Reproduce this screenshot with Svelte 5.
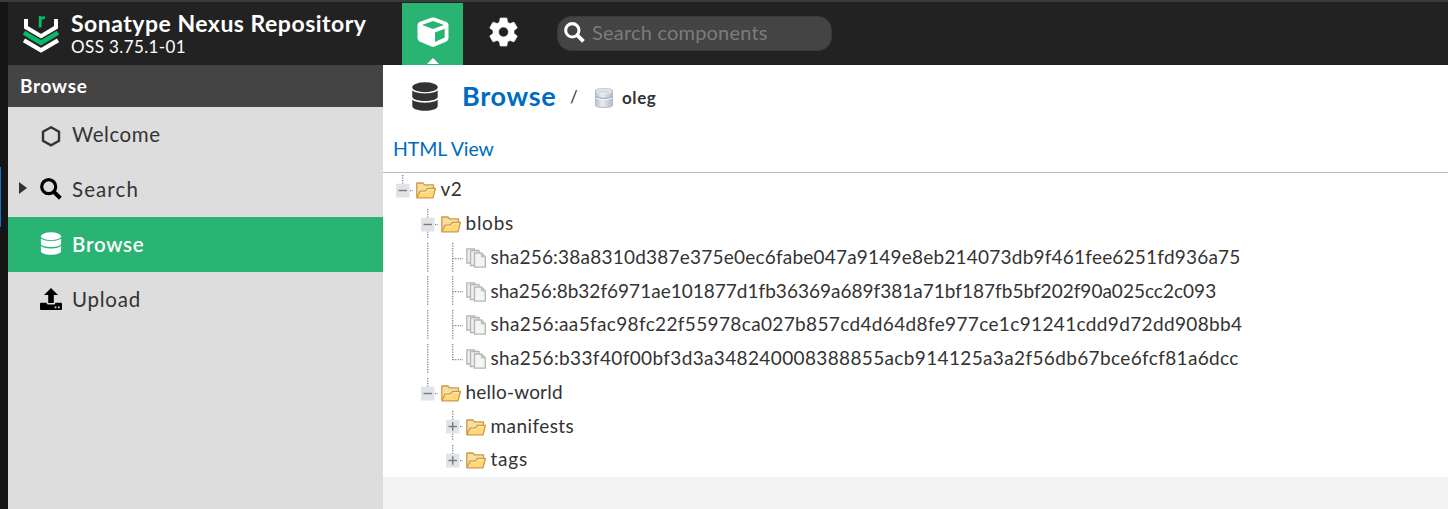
<script>
  const nav = [
    { label: 'Welcome', icon: 'hex', ls: 0.57 },
    { label: 'Search', icon: 'search', ls: 1.1, arrow: true },
    { label: 'Browse', icon: 'db', ls: 0.75, active: true },
    { label: 'Upload', icon: 'upload', ls: 0.75 }
  ];
  // cells: m = minus, p = plus, t = tee, l = last elbow, v = line, e = empty;
  // a second letter tells whether the guide runs through (b) or stops (u)
  const rows = [
    { cells: ['mu'], label: 'v2', ls: 0.5 },
    { cells: ['e', 'mb'], label: 'blobs', ls: 0.75 },
    { cells: ['e', 'v', 't'], file: true, label: 'sha256:38a8310d387e375e0ec6fabe047a9149e8eb214073db9f461fee6251fd936a75', ls: 0.215 },
    { cells: ['e', 'v', 't'], file: true, label: 'sha256:8b32f6971ae101877d1fb36369a689f381a71bf187fb5bf202f90a025cc2c093', ls: 0.01 },
    { cells: ['e', 'v', 't'], file: true, label: 'sha256:aa5fac98fc22f55978ca027b857cd4d64d8fe977ce1c91241cdd9d72dd908bb4', ls: 0.355 },
    { cells: ['e', 'v', 'l'], file: true, label: 'sha256:b33f40f00bf3d3a348240008388855acb914125a3a2f56db67bce6fcf81a6dcc', ls: 0.36 },
    { cells: ['e', 'mu'], label: 'hello-world', ls: 0.2 },
    { cells: ['e', 'e', 'pb'], label: 'manifests', ls: 0.42 },
    { cells: ['e', 'e', 'pu'], label: 'tags', ls: 0.75 }
  ];
</script>

{#snippet search()}
  <svg class="glyph" viewBox="0 0 22 22"><circle cx="8.7" cy="8.7" r="7" fill="none" stroke="currentColor" stroke-width="3.2" /><path d="M13.8 13.8 20.4 20.2" stroke="currentColor" stroke-width="4" /></svg>
{/snippet}

{#snippet database()}
  <svg class="glyph" viewBox="0 0 26 29" fill="currentColor">
    <ellipse cx="13" cy="5.3" rx="12.7" ry="5" />
    <path d="M.3 8.3C4 12.500 22 12.500 25.700 8.300v6.500C25.700 20.400.3 20.400.3 14.800Z" />
    <path d="M.3 17.600C4 21.800 22 21.800 25.700 17.600v6.300C25.700 30.200.3 30.200.3 23.900Z" />
  </svg>
{/snippet}

<div class="shell">
  <div class="edge"><div class="edge-mark"></div></div>
  <div class="app">
    <header>
      <div class="brand">
        <svg class="logo" viewBox="0 0 36 37">
          <g fill="none">
            <path d="M3 3V11.3L18 20.2 33 11.3V3" stroke="#fff" stroke-width="4" />
            <path d="M1 16.600 18 26.800 35 16.600" stroke="#07b968" stroke-width="4.600" />
            <path d="M1 24.300 18 34.300 35 24.300" stroke="#fff" stroke-width="4.200" />
            <path d="M17.200 11.500V0M17.200 3.500Q18.500 1.600 22 1.600" stroke="#07b968" stroke-width="2.800" />
          </g>
        </svg>
        <div class="names">
          <div class="product">Sonatype Nexus Repository</div>
          <div class="version">OSS 3.75.1-01</div>
        </div>
      </div>
      <div class="tab">
        <svg class="cube" viewBox="0 0 32 30"><path d="M14.2.8Q16 0 17.8.8L29.5 5Q31.5 5.8 31.5 8V21Q31.5 23.6 29.4 24.6L17.6 29.4Q16 30 14.4 29.4L2.6 24.6Q.5 23.6.5 21V8Q.5 5.8 2.5 5Z" fill="#fff" /><path d="M16 4.1 27 7.9 16 12 5 7.9ZM18 15.5 27.7 11.8V20.5L18 25Z" fill="#29b473" /></svg>
        <svg class="caret" viewBox="0 0 12 6"><path d="M6 0 12 6H0Z" fill="#fff" /></svg>
      </div>
      <svg class="gear" viewBox="1.700 1.800 20.600 20.400"><path stroke="#fff" stroke-width=".4" fill="#fff" d="M19.43 12.98c.04-.32.07-.64.07-.98s-.03-.66-.07-.98l2.11-1.65c.19-.15.24-.42.12-.64l-2-3.46c-.12-.22-.39-.3-.61-.22l-2.49 1c-.52-.4-1.08-.73-1.69-.98l-.38-2.65C14.46 2.18 14.25 2 14 2h-4c-.25 0-.46.18-.49.42l-.38 2.65c-.61.25-1.17.59-1.69.98l-2.49-1c-.23-.09-.49 0-.61.22l-2 3.46c-.13.22-.07.49.12.64l2.11 1.65c-.04.32-.07.65-.07.98s.03.66.07.98l-2.11 1.65c-.19.15-.24.42-.12.64l2 3.46c.12.22.39.3.61.22l2.49-1c.52.4 1.08.73 1.69.98l.38 2.65c.03.24.24.42.49.42h4c.25 0 .46-.18.49-.42l.38-2.65c.61-.25 1.17-.59 1.69-.98l2.49 1c.23.09.49 0 .61-.22l2-3.46c.12-.22.07-.49-.12-.64zM12 15.5A3.5 3.5 0 1 1 12 8.500a3.500 3.500 0 0 1 0 7z" /></svg>
      <div class="searchbox">{@render search()}<span>Search components</span></div>
    </header>
    <div class="body">
      <aside>
        <div class="heading">Browse</div>
        {#each nav as item}
          <div class="nav" class:active={item.active}>
            <span class="arrow">{#if item.arrow}<svg viewBox="0 0 8 12"><path d="M0 0 8 6 0 12Z" fill="#333" /></svg>{/if}</span>
            <span class="icon {item.icon}">
              {#if item.icon === 'hex'}
                <svg class="glyph" viewBox="0 0 22 22"><path d="M11 2.300 19 6.800V15.800L11 20.300 3 15.800V6.800Z" fill="none" stroke="#333" stroke-width="2.400" /></svg>
              {:else if item.icon === 'search'}
                {@render search()}
              {:else if item.icon === 'db'}
                {@render database()}
              {:else}
                <svg class="glyph" viewBox="0 0 22 22"><path d="M11 0 18 7H13.800V15H8.200V7H4ZM1 14.700H6.700V15.200Q7 16.500 8 16.500H14Q15 16.500 15.300 15.200V14.700H21Q22 14.700 22 15.700V21Q22 22 21 22H1Q0 22 0 21V15.700Q0 14.700 1 14.700Z" fill="#000" /><path d="M14.700 18.600h1.700v1.700h-1.700zM18 18.600h1.700v1.700H18z" fill="#ddd" /></svg>
              {/if}
            </span>
            <span class="text" style="letter-spacing:{item.ls}px">{item.label}</span>
          </div>
        {/each}
      </aside>
      <main>
        <div class="crumbs">
          <span class="crumb-icon">{@render database()}</span>
          <span class="crumb-title">Browse</span>
          <span class="slash">/</span>
          <svg class="repo" viewBox="0 0 18 20">
            <defs><linearGradient id="metal"><stop offset="0" stop-color="#b9c2cc" /><stop offset=".4" stop-color="#e6ecf2" /><stop offset="1" stop-color="#b4bdc8" /></linearGradient></defs>
            <path d="M.5 3Q.5.5 9 .5T17.500 3V17Q17.500 19.500 9 19.500T.5 17Z" fill="url(#metal)" stroke="#b4bcc5" />
            <ellipse cx="9" cy="3.300" rx="7.500" ry="2.300" fill="#d5dce4" stroke="#f3f6f9" stroke-width=".7" />
            <path d="M.5 8.500Q9 12.500 17.500 8.500" fill="none" stroke="#98a3af" /><path d="M1 9.800Q9 13.800 17 9.800" fill="none" stroke="#f7f9fb" />
          </svg>
          <span class="repo-name">oleg</span>
        </div>
        <div class="toolbar">HTML View</div>
        <div class="tree">
          {#each rows as row}
            <div class="row">
              {#each row.cells as c}
                <svg class="cell" viewBox="0 0 25 33.750">
                  <g stroke="#858585" stroke-width="1.300" stroke-dasharray="1.250 1.250" fill="none">
                    {#if 'vt'.includes(c) || c[1] === 'b'}<path d="M9.700 2V31.500" />{/if}
                    {#if c === 'l' || c[1] === 'u'}<path d="M9.700 2V18" />{/if}
                    {#if c !== 'v' && c !== 'e'}<path d="M9.500 17.600H20" />{/if}
                  </g>
                  {#if c[0] === 'm' || c[0] === 'p'}
                    <rect x="3" y="10.700" width="13.500" height="13.800" fill="#e0e3e7" />
                    <path d="M5.500 17.500H14" stroke="#777b80" stroke-width="1.400" />
                    {#if c[0] === 'p'}<path d="M9.700 13.200V21.800" stroke="#777b80" stroke-width="1.400" />{/if}
                  {/if}
                </svg>
              {/each}
              {#if row.file}
                <svg class="node" viewBox="0 0 20 20" fill="#eceeed" stroke="#b4b6b6" stroke-width="1.300">
                  <path d="M.8.800H8.500V15H.8Z" /><path d="M4.500 2.500H13V17.500H4.500Z" /><path d="M8.500 5H15.500L19.300 8.800V19.200H8.500Z" fill="#f4f5f5" /><path d="M15.300 6V9H18.500Z" fill="#cfd4d4" stroke-width=".8" />
                </svg>
              {:else}
                <svg class="node" viewBox="0 0 20 20" stroke="#cf9845" stroke-width="1.300" stroke-linejoin="round">
                  <path d="M.8 17.200V3H7L8.500 4.800H17.500V9" fill="#f7dfa2" /><path d="M.8 17.800 4 11.200H9L11.500 8.500H19.400L17 17.800Z" fill="#ffd978" /><path d="M4.800 12.300H9.500L12 9.600H18" fill="none" stroke="#fff0bd" stroke-width=".9" />
                </svg>
              {/if}
              <span class="text" style="letter-spacing:{row.ls}px">{row.label}</span>
            </div>
          {/each}
        </div>
      </main>
    </div>
  </div>
</div>

<style>
  :global(body) { margin: 0; overflow: hidden; }
  .shell { display: flex; width: 1448px; height: 509px; font-family: Lato, sans-serif; color: #333; white-space: nowrap; box-sizing: border-box; border-top: 2px solid #3b3b3d; background: #222; }
  svg { display: block; flex: none; }
  .edge { width: 8px; background: #151515; flex: none; padding-top: 165px; box-sizing: border-box; }
  .edge-mark { width: 1px; height: 60px; background: #0875d1; }
  .app { flex: 1; display: flex; flex-direction: column; min-width: 0; }
  header { height: 63px; flex: none; display: flex; background: #222; color: #fff; }
  .brand { display: flex; width: 394px; }
  .logo { width: 36px; height: 37px; margin: 14px 0 0 15px; }
  .names { margin-left: 12px; padding-top: 7px; }
  .product { font-size: 23px; font-weight: 700; line-height: 29px; letter-spacing: .5px; }
  .version { font-size: 17px; line-height: 17px; letter-spacing: .4px; }
  .tab { width: 61px; height: 62px; margin-top: 1px; background: #29b473; display: flex; flex-direction: column; align-items: center; }
  .cube { width: 32px; height: 30px; margin-top: 14px; }
  .caret { width: 12px; height: 6px; margin-top: 11px; }
  .gear { width: 29px; height: 30px; margin: 15px 0 0 26px; }
  .searchbox { box-sizing: border-box; width: 275px; height: 35px; margin: 14px 0 0 39px; border: 1px solid #3a3a3a; border-radius: 14px; background: #444; display: flex; align-items: center; padding-left: 6px; color: #fff; font-size: 20px; }
  .searchbox .glyph { width: 21px; height: 21px; margin-right: 7px; margin-top: -2px; }
  .searchbox span { color: #7c7c7c; padding-bottom: 4px; letter-spacing: .2px; }
  .glyph { width: 100%; height: 100%; }
  .body { flex: 1; display: flex; min-height: 0; }
  aside { width: 375px; background: #ddd; flex: none; }
  .heading { height: 42px; box-sizing: border-box; padding: 0 0 0 12px; line-height: 42px; background: #444; color: #fff; font-size: 19px; font-weight: 700; letter-spacing: .65px; }
  .nav { height: 55px; display: flex; align-items: center; font-size: 20.500px; }
  .text { padding-bottom: 2px; }
  .nav.active { background: #29b473; color: #fff; font-weight: 600; }
  .arrow { width: 21px; padding-left: 11px; }
  .arrow svg { width: 8px; height: 12px; margin-top: -4px; }
  .icon { width: 22px; height: 22px; margin-right: 10px; color: #000; }
  .icon.hex { margin-top: 2px; }
  .icon.search, .icon.upload { margin-top: -2px; }
  .icon.db { color: #fff; height: 23px; margin-top: -3px; }
  main { flex: 1; background: #f3f3f3; min-width: 0; }
  .crumbs { height: 62px; background: #fff; display: flex; align-items: center; }
  .crumb-icon { width: 26px; height: 29px; margin-left: 29px; flex: none; }
  .crumb-title { font-size: 27px; font-weight: 700; color: #006bbf; margin-left: 24px; width: 94px; padding-bottom: 2px; letter-spacing: .7px; }
  .slash { font-size: 17px; margin: 1px 0 0 14px; width: 25px; }
  .repo { width: 18px; height: 20px; margin-top: 4px; }
  .repo-name { font-size: 17px; font-weight: 700; margin: 3px 0 0 9px; letter-spacing: .6px; }
  .toolbar { height: 46px; line-height: 43px; box-sizing: border-box; border-bottom: 1px solid #bbb; background: #fff; padding-left: 10px; color: #006bbf; font-size: 19.500px; letter-spacing: -.1px; }
  .tree { background: #fff; height: 304px; }
  .row { height: 33.750px; display: flex; align-items: center; padding-left: 10px; font-size: 19px; }
  .cell { width: 25px; height: 33.750px; }
  .node { width: 20px; height: 20px; margin: 1px 5px 0 -2.500px; }
</style>
